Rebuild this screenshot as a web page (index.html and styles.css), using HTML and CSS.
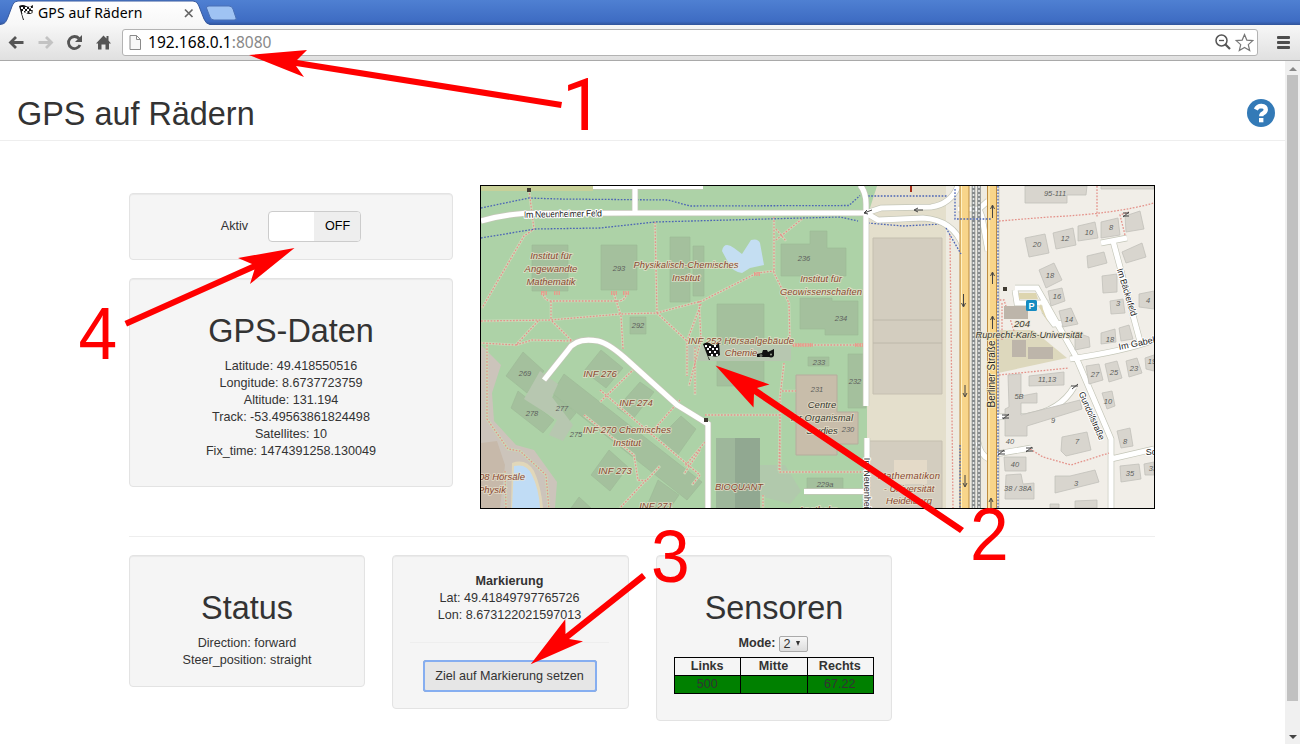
FILE: index.html
```html
<!DOCTYPE html>
<html lang="de">
<head>
<meta charset="utf-8">
<title>GPS auf Rädern</title>
<link rel="stylesheet" href="styles.css">
</head>
<body>
<div class="browser">
  <div class="tabbar">
    <svg class="tabs" width="260" height="25" viewBox="0 0 260 25">
      <defs><linearGradient id="tabfill" x1="0" y1="0" x2="0" y2="1"><stop offset="0" stop-color="#fff"/><stop offset="1" stop-color="#f7f7f7"/></linearGradient></defs>
      <path d="M0 24.5C5 24 6 22 8 17L12.500 5Q14 1 18 1H193Q197 1 198.500 5L204 19Q206 24 210 24.500V26H0Z" fill="url(#tabfill)" stroke="#36589d"/>
      <path d="M209 6H229Q232 6 233 9L236 18Q237 20 234 20H214Q211 20 210 17L206.500 8Q206 6 209 6Z" fill="#9fc3f3" stroke="#4a70b5"/>
      <g transform="translate(19 5)">
        <path d="M0 1Q4-1 7 1T14 0L13.500 8Q10 10 7 8T3 9L5 15H4L0 1Z" fill="#151515"/>
        <path d="M2 2h2v2H2zM6 2h2v2H6zM10 1.500h2v2h-2zM4 4h2v2H4zM8 4h2v2H8zM12 3h2v2h-2zM3 6h2v2H3zM6.500 6h2v2h-2zM10.500 6h2v2h-2z" fill="#fff"/>
      </g>
      <path d="M185 9.500l7.500 7.500M192.500 9.500l-7.500 7.500" stroke="#666" stroke-width="1.700"/>
    </svg>
    <span class="tab-title">GPS auf Rädern</span>
  </div>
  <div class="toolbar">
    <svg class="nav" width="122" height="35" viewBox="0 25 122 35" fill="none">
      <path d="M23.500 42.500H11M16 37l-5.500 5.500L16 48" stroke="#555" stroke-width="2.800"/>
      <path d="M38.500 42.500H51M46 37l5.500 5.500L46 48" stroke="#c3c3c3" stroke-width="2.800"/>
      <path d="M79 38.500A6 6 0 1 0 80 45" stroke="#555" stroke-width="2.800"/><path d="M82 35v7h-7z" fill="#555"/>
      <path d="M96 43.500l7.500-8 3 3V36h2v4.500l2.500 3h-2V49.500h-3.500v-5h-4v5H98v-6z" fill="#555"/>
    </svg>
    <div class="omnibox">
      <svg width="13" height="17" viewBox="0 0 13 17"><path d="M1 1.500h6.500l4 4v10H1zM7.500 1.500v4h4" fill="#f7f7f7" stroke="#8a8a8a"/></svg>
      <span class="url">192.168.0.1<span class="port">:8080</span></span>
      <svg class="omni-icons" width="40" height="20" viewBox="1214 32 40 20" fill="none">
        <circle cx="1221.500" cy="40.500" r="5.500" stroke="#555" stroke-width="1.500"/><path d="M1219 40.500h5" stroke="#555" stroke-width="1.300"/><path d="M1225.500 44.500l4.500 4.500" stroke="#555" stroke-width="2.200"/>
        <path d="M1244.500 34.500l2.300 5.600 6 .5-4.500 4 1.400 6-5.200-3.200-5.200 3.200 1.400-6-4.500-4 6-.5z" stroke="#777" stroke-width="1.200"/>
      </svg>
    </div>
    <div class="menu"><i></i><i></i><i></i></div>
  </div>
  <div class="viewport">
    <main class="page">
      <header class="page-header">
        <h1>GPS auf Rädern</h1>
        <svg width="28" height="28" viewBox="0 0 28 28"><circle cx="14" cy="14" r="14" fill="#337ab7"/><path d="M8.800 10.500Q10.500 7 14.300 7 18.800 7.400 18.800 10.800 18.600 13 16 14.300 14.200 15.200 14.200 17.300" fill="none" stroke="#fff" stroke-width="4.300"/><path d="M12 19h4.400v4.300H12z" fill="#fff"/></svg>
      </header>
      <div class="container">
        <div class="top-row">
          <div class="left-col">
            <section class="well switch-well"><span>Aktiv</span><div class="switch"><span class="off">OFF</span></div></section>
            <section class="well gps-well">
              <h2>GPS-Daten</h2>
              <p>Latitude: 49.418550516<br>Longitude: 8.6737723759<br>Altitude: 131.194<br>Track: -53.49563861824498<br>Satellites: 10<br>Fix_time: 1474391258.130049</p>
            </section>
          </div>
          <div class="map">
            <svg width="673" height="322" viewBox="481 186 673 322">
              <defs>
                <path id="walks" d="M529 190l5 39-10 7-42 72M655 222l2 91M481 321l69-1 71-6 36-1 18-5 27-7 55-28 17-2M774 217v56l15 30 1 42M802 219l-26 21M776 229l10 12M543 291q0 9 8 10h67q8 0 9-10M551 301v18M614 294l7 22 2 33M538 321l-22 24-35-2M552 321l20 20-40-1-16 5M657 313l30 28M699 301l2 39-12 46M701 304l-14 37v35M695 347v48M705 415h75l-1 56M784 363l-4 34v75h85M782 391h14M792 345h74M634 369l-34 33M600 390l50 43 50 42M584 415l50 40 4 25 8 1 14-15M646 480l-26 28M705 442l-20 24M680 400l-30 34M700 450l-16 24M763 495v13M505 471l1 37M487 345v74l21 30 12 2 26 24 3 34M700 475l-8 10"/>
                <path id="roads" d="M481 221q20-6 42-7.500l112-.5h230M635 187v25M593 186.500h110M860 185q6 7 6 19v202M867 438v70M544 380l24-30q8-13 30-9 10 2 27 17l52 47 31 19v84M804 491.500h62"/>
                <path id="eastroads" d="M866 213l15-5 50-1q20-3 27-21M866 213l12 7 45-2q30 2 40 28M958 209h21l9-8M979 209l3 8 6 34M1101 243l26-5M1113 241l28 104M1015 288h22l38 67 36 84v69M1015 290l2 13h28v9l9 12 9-1M1070 359q55-8 84-19M1111 459l43-10M994 417l34-1q32-5 46-29M990 455l41-7M978 442q2 13 11 17"/>
              </defs>
              <rect x="481" y="186" width="673" height="322" fill="#f1eee8"/>
              <path d="M860 186h140v322H860z" fill="#e4dfcc"/>
              <path d="M946 186h52v322h-52z" fill="#eeebe1"/>
              <path d="M481 186h396l-7 22-3 12v288H481z" fill="#add2a7"/>
              <path d="M481 186h112v5H481z" fill="#c8d098"/>
              <path d="M481 345l20 20-9 28 2 28 22 24 18 5 23 32-2 26h-75z" fill="#ccc4bb"/>
              <path d="M481 443l16-2 8 24-5 43h-19z" fill="#c7b9aa"/>
              <path d="M512 463q14-5 22 8 7 15 9 37h-32z" fill="#e1d7b9"/>
              <path d="M514 466q13-3 18 9 7 14 8 33h-28z" fill="#c0dcf5"/>
              <path d="M722 251q2-10 12-3l8 6 9-14q7-2 9 3l4 22-14 3-8 5q-9-1-13-9z" fill="#c4def2"/>
              <path d="M873 238h69v156h-69zM868 441h74v67h-74z" fill="#d3cdbf" stroke="#c5bfb0"/>
              <path d="M873 320h69M873 343h69" stroke="#bdb8aa"/>
              <path d="M998 330h35l34 28-69 15z" fill="#ddd8bd"/>
              <path d="M894 460h33v24h-33z" fill="#e4dac8"/>
              <g fill="#a4c09d" stroke="#9cb896" stroke-width=".6">
                <path d="M532 245h36v46h-36zM601 245h36v45h-36zM670 237h20v65h-20zM693 246h11v50h-11zM630 317h16v17h-16zM810 231h17v17h19v28h-65v-32h29zM800 298h32v3h26v34h-33v-6h-25zM717 304h47v82h-47zM848 354h18v54h-18zM808 357h21v9h-21zM807 478h36v12h-36z"/>
                <path d="M523 352l21 19-17 22-21-17zM518 391l36 29-11 13-32-25zM554 395l22 18-10 12-19-17zM564 374l138 108-15 18-135-107zM601 350l22 18-17 20-22-17zM640 382l14 10-21 27-16-11zM681 416l15 13-19 27-20-16zM609 450l19 17-18 24-19-16zM658 480l21 15-9 13h-24zM579 497l12 11h-20z"/>
              </g>
              <path d="M540 371l18 13-6 13 21 28-10 16-14-6 8-15-33-21zM687 345h104v16H687z" fill="#b7c7b0"/>
              <path d="M716 438h44v70h-44z" fill="#9eb79b"/><path d="M735 438h25v70h-25z" fill="#91a891"/><path d="M760 465h25l16 26-11 13-30-8z" fill="#b1c9ac"/>
              <path d="M796 375h41v37h21v32h-21v11h-41z" fill="#c8bdaa" stroke="#b6ac9d"/>
              <use href="#walks" class="walk-base"/>
              <use href="#walks" class="dots red"/>
              <path d="M481 208l48-10 31 1 108 1 22 6 159-.5 11-10M868 196h80M481 238l54-9 65-1 55-6 185-5 18 4M868 223l35 3 40-2 18 14" class="dots blue"/>
              <g class="casing"><use href="#roads"/><use href="#eastroads"/></g>
              <g class="surface"><use href="#roads"/><use href="#eastroads"/></g>
              <path d="M964.500 186v322M992 186v322" stroke="#bd8c40" stroke-width="10"/><path d="M964.500 186v322M992 186v322" stroke="#f8d58a" stroke-width="8"/><path d="M961.500 186v322M989 186v322" stroke="#fff2c5"/>
              <path d="M973.500 186v322M979 186v322" stroke="#868b8c" stroke-width="3.600"/><path d="M973.500 186v322M979 186v322" stroke="#e4e7e7" stroke-width="1.600" stroke-dasharray="2 2"/>
              <path d="M950 235l3 273M999 221l50-4q65-3 105-14M1097 186v32M1125 235l-5-20 9-3M999 375l70-7M1030 449l13 8 28 8 38-12M1014 331l-10-31h-9M1002 303v38" class="dots red"/>
              <path d="M998 186v322M960 445v63M955 189v30h36M946 228l15 26" class="dots blue"/>
              <g fill="#d8d5ce" stroke="#c2c0ba" stroke-width=".8">
                <path d="M1025 186h62l-1 9h-19v8h-42zM1101 186h53v3h-53zM1025 238l20-4 4 19-20 4zM1053 233l20-5 3 17-20 4zM1078 226l17-4 3 16-20 3zM1101 222l17-4 2 17-19 3zM1125 216l15-5 4 18-18 3zM1087 256l17-4 3 11-19 5zM1122 252l20-9 4 14-20 6zM1039 270l15-7 8 17-16 8zM1048 291l14-3 3 13-14 5zM1059 311l12-3 7 16-15 3zM1102 276l15-2v18l-14 1zM1110 301l13-2 2 14-14 1zM1139 294l15-3v18l-15-2zM1101 333l14-4 1 13-15 2zM1119 328l10-3 4 14-12 2zM1075 332l14 5 1 10-15 3zM1086 366l13-2 4 16-14 4zM1105 364l12-3 5 17-13 4zM1126 361l11-3 5 15-13 4zM1145 358l9-3v16l-8-2zM1102 393l10-2 3 15-8 3zM1117 431l13-3 3 18-12 2zM1120 466l19-2 2 15-20 3zM1144 464l10-2v13h-9z"/>
                <path d="M1029 376l35-4v13l-35 1zM1008 375l13-1v22l16-3v10h-16v12l59-15 2 9-55 17v10h-22v-27l4-2zM1062 437l25-5 4 18-25 6-5-5zM1004 457h22v14h-21zM1006 475l15-1 2 10 11-1v16h-29zM1055 476h15l25-6 4 12-44 11zM1075 501l22-1v8h-22zM1050 504h9v4h-9z"/>
              </g>
              <path d="M1004 306h24v13h-24zM1012 340h14v17h-14zM1028 347h25v12h-25z" fill="#bdb5aa"/>
              <path d="M1019 293h17l2 6h-19zM1041 304l7 18-9-15z" fill="#ddd5af"/>
              <rect x="1026" y="300" width="11" height="11" rx="1.500" fill="#168bc1"/><text x="1031.500" y="309.300" class="parking">P</text>
              <path d="M1003 287h4v4h-4zM527 188h4v4h-4zM704 418h4v4h-4z" fill="#403b32"/>
              <g class="glyphs"><path d="M963.500 294v12m-2-3 2 4 2-4M965 385v11m-2-3 2 4 2-4M965 475v11m-2-3 2 4 2-4M992.500 218v-12m-2 3 2-4 2 4M992.500 284v-11m-2 3 2-4 2 4M992.500 329v-12m-2 3 2-4 2 4M991 508v-9m-2 3 2-4 2 4M923 210h-8m3-2-4 2 4 2M872 210l-8 3m3-3-3 3 4 1M1003 419l6-5M1002 415h7M1002 418h7M998 455l6-5M998 451h7M998 454h7M1026 452l6-5M1026 448h7M1026 451h7M1072 389l6-5M1071 386h7M1123 217l6-5M1123 213h6M1123 216h6"/></g>
              <g fill="none" stroke="#e99a8a" stroke-width="4" stroke-dasharray="1 .7"><path d="M541 293h6M554 293h6M611 293h6M623 293h6M793 345h20M855 345h8M754 274h6"/></g>
              <g class="place">
                <text x="551" y="259">Institut für</text><text x="551" y="272">Angewandte</text><text x="551" y="285">Mathematik</text>
                <text x="686" y="268" textLength="105">Physikalisch-Chemisches</text><text x="686" y="281">Institut</text>
                <text x="821" y="282">Institut für</text><text x="821" y="295" textLength="82">Geowissenschaften</text>
                <text x="741" y="344" textLength="106">INF 252 Hörsaalgebäude</text><text x="741" y="356">Chemie</text>
                <text x="600" y="377">INF 276</text><text x="636" y="406">INF 274</text><text x="627" y="433" textLength="88">INF 270 Chemisches</text><text x="627" y="446">Institut</text><text x="615" y="474">INF 273</text><text x="656" y="509">INF 271</text>
                <text x="502" y="480">08 Hörsäle</text><text x="492" y="493">Physik</text><text x="739" y="490" textLength="48">BIOQUANT</text>
                <text x="909" y="479" textLength="62">Mathematikon</text><text x="909" y="492">- Universität</text><text x="909" y="504">Heidelberg</text><text x="818" y="513">Apotheke</text>
              </g>
              <g class="place dark">
                <text x="822" y="408">Centre</text><text x="822" y="421" textLength="62">for Organismal</text><text x="822" y="434">Studies</text>
                <text x="1022" y="327">204</text><text x="1029" y="337.500" textLength="107">Ruprecht-Karls-Universität</text>
              </g>
              <g class="street"><text x="563" y="217" transform="rotate(-1 563 217)" textLength="78">Im Neuenheimer Feld</text><text transform="translate(995 374) rotate(-90)" textLength="67" class="main-street">Berliner Straße</text><text transform="translate(1124 293) rotate(73)" textLength="49">Im Bäckerfeld</text><text transform="translate(1089 417) rotate(66)" textLength="52">Gundolfstraße</text><text transform="translate(1148 344) rotate(-12)">Im Gabelacker</text><text x="1170" y="455">Schröderstr.</text><text transform="translate(864 491) rotate(90)">Im Neuenheimer</text></g>
              <g class="num"><text x="619" y="271">293</text><text x="638" y="328">292</text><text x="804" y="261">236</text><text x="841" y="321">234</text><text x="525" y="376">269</text><text x="532" y="416">278</text><text x="562" y="411">277</text><text x="576" y="437">275</text><text x="819" y="365">233</text><text x="855" y="384">232</text><text x="817" y="392">231</text><text x="848" y="432">230</text><text x="825" y="487">229a</text><text x="1055" y="196">95-111</text><text x="1037" y="247">20</text><text x="1065" y="241">12</text><text x="1089" y="235">10</text><text x="1111" y="230">8</text><text x="1050" y="278">18</text><text x="1057" y="299">16</text><text x="1069" y="322">14</text><text x="1118" y="306">3</text><text x="1148" y="303">4</text><text x="1110" y="342">18</text><text x="1095" y="377">27</text><text x="1114" y="375">25</text><text x="1134" y="371">23</text><text x="1152" y="364">19</text><text x="1047" y="382">11,13</text><text x="1019" y="399">5B</text><text x="1108" y="404">10</text><text x="1053" y="423">9</text><text x="1010" y="444">40</text><text x="1015" y="467">40</text><text x="1077" y="444">7</text><text x="1125" y="444">8</text><text x="1076" y="486">3</text><text x="1130" y="476">35</text><text x="1153" y="471">33</text><text x="1018" y="491">38 / 38A</text></g>
              <path d="M911 186v6" stroke="#a42b16" stroke-width="2"/>
              <path d="M757 357v-3l5-1 1-3h4l1 2 6-3v6l-2 2z" fill="#111"/><circle cx="761" cy="355.500" r="1.500" fill="#687064"/><circle cx="771" cy="354.500" r="3" fill="#111"/><circle cx="771" cy="354.500" r="1" fill="#99a391"/>
              <path d="M703 344q4-3 8 0t8-1l1 12q-4 3-8 1l-4 0 2 4h-1z" fill="#111"/><path d="M705 345h2v2h-2zM709 346h2v2h-2zM714 345h2v2h-2zM707 348h2v2h-2zM712 348h2v2h-2zM716 348h2v2h-2zM709 351h2v2h-2zM714 351h2v2h-2zM711 354h2v2h-2zM716 354h2v2h-2z" fill="#fff"/>
            </svg>
          </div>
        </div>
        <hr>
        <div class="bottom-row">
          <section class="well status-well"><h2>Status</h2><p>Direction: forward<br>Steer_position: straight</p></section>
          <section class="well mark-well"><p><b>Markierung</b><br>Lat: 49.41849797765726<br>Lon: 8.673122021597013</p><hr><button>Ziel auf Markierung setzen</button></section>
          <section class="well sensor-well"><h2>Sensoren</h2><div class="mode"><b>Mode:</b><span class="select">2 <i></i></span></div>
            <table><tr><th>Links</th><th>Mitte</th><th>Rechts</th></tr><tr class="values"><td>500</td><td></td><td>67.22</td></tr></table>
          </section>
        </div>
      </div>
    </main>
    <div class="scrollbar"><i class="up"></i><i class="thumb"></i><i class="down"></i></div>
  </div>
  <svg class="annotations" width="1300" height="744" viewBox="0 0 1300 744">
    <path d="M249 55L307 50 297 60 562 102 561 108 296 66 304 77Z"/>
    <path d="M715.500 365.500L769.500 384.500 757 388 964 528 960 533 754 394 753.500 407.500Z"/>
    <path d="M530.700 664.300L565.300 619.300 565.500 634 642 573 646 578 569 639 583 641.300Z"/>
    <path d="M294.500 248L250 284 254.500 269.500 127 326.500 124.500 321 252 264 238 258Z"/>
    <text x="562" y="130" class="one">1</text>
    <text transform="translate(970 560) scale(.94 1)">2</text>
    <text transform="translate(651 582) scale(.94 1)">3</text>
    <text transform="translate(78.500 359) scale(.94 1)">4</text>
  </svg>
</div>
</body>
</html>
```
FILE: styles.css
```css
* { box-sizing: border-box; }
body { margin: 0; font: 12.6px/17px "Liberation Sans", Arial, sans-serif; color: #333; background: #fff; overflow: hidden; }
.browser { position: relative; width: 1300px; height: 744px; display: flex; flex-direction: column; overflow: hidden; }
.tabbar { position: relative; height: 25px; flex: none; background: linear-gradient(#4f80d2, #3e6cc3 85%, #31549a); }
.tabs { display: block; }
.tab-title { position: absolute; left: 38px; top: 4px; color: #000; font: 14px/18px "Noto Sans", "Open Sans", sans-serif; letter-spacing: .15px; white-space: nowrap; }
.toolbar { height: 36px; flex: none; display: flex; align-items: center; background: linear-gradient(#f7f7f7, #e0e0e0); border-bottom: 1px solid #a9a9a9; }
.nav { display: block; flex: none; }
.omnibox { width: 1136px; height: 27px; display: flex; align-items: center; background: #fff; border: 1px solid #b3b3b3; border-radius: 3px; padding: 0 3px 0 6px; }
.url { margin: -2px 0 0 6px; color: #000; font: 15.500px/20px "Noto Sans", "Open Sans", sans-serif; letter-spacing: .03px; }
.port { color: #888; }
.omni-icons { margin: -2px 0 0 auto; }
.menu { display: flex; flex-direction: column; gap: 2px; margin-left: 19px; }
.menu i { width: 13px; height: 3px; border-radius: 1px; background: #4d4d4d; }
.viewport { display: flex; flex: 1; min-height: 0; }
.page { width: 1285px; flex: none; }
.page-header { height: 80px; padding: 26px 10px 0 17px; border-bottom: 1px solid #eee; display: flex; justify-content: space-between; align-items: center; }
h1, h2 { margin: 0; font-weight: 400; font-size: 32.4px; line-height: 36px; }
.page-header svg { display: block; margin-top: -1px; }
p { margin: 0; }
.container { width: 1026px; margin-left: 129px; padding-top: 44px; }
.top-row { display: flex; justify-content: space-between; }
.left-col { width: 324px; padding-top: 8px; display: flex; flex-direction: column; gap: 18px; }
.well { background: #f5f5f5; border: 1px solid #e3e3e3; border-radius: 4px; box-shadow: inset 0 1px 1px rgba(0,0,0,.05); text-align: center; }
.switch-well { height: 67px; display: flex; justify-content: center; gap: 20px; padding: 17px 0 0; line-height: 30px; }
.switch { width: 93px; height: 31px; border: 1px solid #ccc; border-radius: 4px; background: #fff; display: flex; justify-content: flex-end; overflow: hidden; }
.off { width: 46px; padding-left: 1px; background: #eee; color: #000; line-height: 28px; }
.gps-well { height: 209px; padding-top: 34px; }
.gps-well p { margin-top: 9px; }
.map { width: 675px; height: 324px; border: 1px solid #000; }
.map svg { display: block; }
hr { border: 0; border-top: 1px solid #eee; margin: 27px 0 18px; }
.bottom-row { display: flex; align-items: flex-start; gap: 27px; }
.status-well { width: 236px; height: 132px; padding-top: 34px; }
.status-well p { margin-top: 9px; }
.mark-well { width: 237px; height: 154px; padding: 17px 19px 0 17px; }
.mark-well hr { margin: 18px 0 17px; }
button { font: inherit; color: #333; width: 174px; height: 32px; padding: 0; background: #e6e6e6; border: 1px solid #8c8c8c; border-radius: 3px; outline: 2px solid #86aef0; outline-offset: -2px; }
.sensor-well { width: 236px; height: 166px; padding: 34px 17px 0; }
.mode { display: flex; justify-content: center; align-items: center; gap: 3px; height: 17px; margin: 9px 2px 0 0; }
.select { width: 29px; height: 16px; border: 1px solid #aaa; border-radius: 2px; background: linear-gradient(#f7f7f7,#ddd); line-height: 14px; text-align: left; padding-left: 4px; display: flex; align-items: center; gap: 5px; }
.select i { border: 2.500px solid transparent; border-top: 5px solid #333; border-bottom: 0; }
table { border-collapse: collapse; width: 200px; height: 37px; margin-top: 5px; table-layout: fixed; }
th, td { border: 1px solid #000; padding: 0 1px 0 0; height: 18px; line-height: 17px; }
.values { background: green; }
.scrollbar { width: 15px; background: #f0f0f0; display: flex; flex-direction: column; align-items: center; padding-top: 6px; }
.up { border: 4px solid transparent; border-bottom: 4px solid #888; border-top: 0; }
.thumb { width: 11px; height: 626px; margin-top: 4px; background: #c1c1c1; }
.down { margin-top: 34px; border: 4px solid transparent; border-top: 4px solid #444; border-bottom: 0; }
.annotations { position: absolute; left: 0; top: 0; fill: #f00; font: 74px "Liberation Sans", Arial, sans-serif; }
.one { font: 73px Roboto, sans-serif; }
.walk-base { fill: none; stroke: #c9dab8; stroke-width: 2.600; }
.casing { fill: none; stroke: #c4c6b8; stroke-width: 6.500; }
.surface { fill: none; stroke: #fff; stroke-width: 5.200; }
.dots { fill: none; stroke-width: 1.300; stroke-dasharray: 1.700 1.500; }
.red { stroke: #e4928a; }
.blue { stroke: #4c65b5; }
.glyphs { fill: none; stroke: #444; stroke-width: 1; }
.place, .street, .num { font-family: "Liberation Sans", Arial, sans-serif; text-anchor: middle; paint-order: stroke; stroke-linejoin: round; }
.place { font-size: 9.500px; font-style: italic; fill: #8b4a33; stroke: rgba(235,229,208,.65); stroke-width: 2px; }
.dark { fill: #393a32; }
.street { font-size: 9px; fill: #222; stroke: #fff; stroke-width: 2px; }
.main-street { font-size: 10px; stroke: #fff0c5; stroke-width: 1.500px; }
.num { font-size: 7.500px; font-style: italic; fill: #5d5f5c; }
.parking { font: bold 9px "Liberation Sans", sans-serif; fill: #fff; text-anchor: middle; }
```
